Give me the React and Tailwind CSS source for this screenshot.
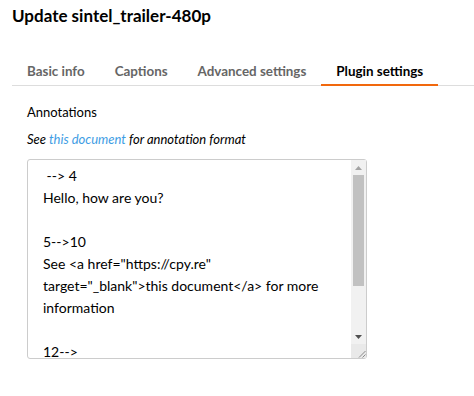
import React from "react";

const content = ` --> 4
Hello, how are you?

5-->10
See <a href="https://cpy.re"
target="_blank">this document</a> for more
information

12-->
Displayed until the end of the video

`;

function Scrollbar() {
  return (
    <div className="absolute right-px top-px bottom-px w-[15px] bg-[#f1f1f1] flex flex-col pointer-events-none">
      <div className="h-[15px] flex items-center justify-center">
        <svg width="7" height="4" viewBox="0 0 7 4">
          <polygon points="0,4 3.5,0 7,4" fill="#a3a3a3" />
        </svg>
      </div>
      <div className="h-[111px] mx-[2px] bg-[#c1c1c1]" />
      <div className="flex-1" />
      <div className="h-[15px] flex items-center justify-center">
        <svg width="7" height="4" viewBox="0 0 7 4">
          <polygon points="0,0 7,0 3.5,4" fill="#505050" />
        </svg>
      </div>
      <div className="h-[14px] bg-[#e9e9e9] flex items-end justify-end">
        <svg width="10" height="10" viewBox="0 0 10 10">
          <line x1="3" y1="9.5" x2="9.5" y2="3" stroke="#8a8a8a" strokeWidth="1" />
          <line x1="6.5" y1="9.5" x2="9.5" y2="6.5" stroke="#8a8a8a" strokeWidth="1" />
        </svg>
      </div>
    </div>
  );
}

export default function App() {
  const font = { fontFamily: "Lato, 'Noto Sans', sans-serif" };
  const tabs = ["Basic info", "Captions", "Advanced settings", "Plugin settings"];
  return (
    <div className="w-[474px] h-[396px] bg-white text-black overflow-hidden" style={font}>
      <div className="pl-[12px] h-[32px] text-[17px] font-bold leading-[32px] text-black whitespace-nowrap">
        Update sintel_trailer-480p
      </div>
      <div className="ml-[12px] mt-[24px] flex border-b border-[#dddddd]">
        {tabs.map((t, i) => (
          <div
            key={t}
            className={
              i === 3
                ? "shrink-0 whitespace-nowrap px-[15px] pt-[5px] pb-[3px] text-[13.4px] font-bold leading-[20px] text-black border-b-[2px] border-[#f1680d] -mb-px"
                : "shrink-0 whitespace-nowrap px-[15px] pt-[5px] pb-[3px] text-[13.4px] font-bold leading-[20px] text-[#666666] border-b-[2px] border-transparent -mb-px"
            }
          >
            {t}
          </div>
        ))}
      </div>
      <div className="pl-[27px] pt-[16px]">
        <div className="text-[13px] leading-[20px] text-black">Annotations</div>
        <div className="mt-[7px] text-[13px] italic leading-[20px] text-black">
          See <span className="text-[#3e9de4]">this document</span> for annotation format
        </div>
        <div className="relative mt-[10px] w-[340px] h-[200px]">
          <textarea
            readOnly
            defaultValue={content}
            className="block w-[340px] h-[200px] border border-[#cccccc] rounded-[3px] pl-[15px] pr-[16px] pt-[5px] text-[14px] leading-[22px] text-black outline-none resize-none overflow-hidden whitespace-pre"
            style={font}
          />
          <Scrollbar />
        </div>
      </div>
    </div>
  );
}
